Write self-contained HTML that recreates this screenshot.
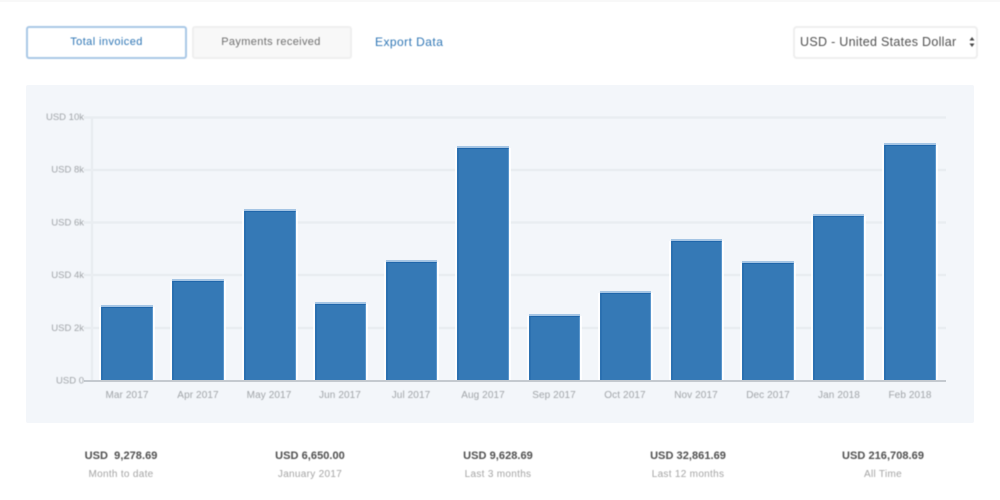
<!DOCTYPE html>
<html>
<head>
<meta charset="utf-8">
<style>
html,body{margin:0;padding:0;background:#fff;width:1000px;height:500px;overflow:hidden}
#wrap{position:relative;width:1000px;height:500px;font-family:"Liberation Sans",sans-serif}
.a{position:absolute;white-space:nowrap}
.c{text-align:center}
.box{box-sizing:border-box;filter:blur(.4px)}
.t{filter:blur(.6px)}
.v{font-size:11px;font-weight:bold;color:#4f4f4f;line-height:14px;letter-spacing:.05px;top:449px;width:160px;white-space:pre}
.s{font-size:10px;color:#a4a4a4;line-height:14px;letter-spacing:.3px;top:468px;width:160px}
.b{position:absolute;box-sizing:border-box;background:#3579b6;border-top:1.5px solid #1f66ab;border-left:2px solid #2b70b0;border-right:1px solid #5a96cc;box-shadow:0 -2px 0 #a5c5e4,-2px 0 0 rgba(255,255,255,.85),2px 0 0 rgba(255,255,255,.85)}
</style>
</head>
<body>
<div id="wrap">
<div class="a" style="left:0;top:0;width:1000px;height:2px;background:#f8f8f8"></div>

<div class="a box" style="left:26px;top:26px;width:161px;height:33px;border:2px solid #a9c8e6;border-radius:3px;background:#fff"></div>
<div class="a c t" style="left:26px;top:35px;width:161px;line-height:14px;font-size:11px;letter-spacing:.42px;color:#2f76b5">Total invoiced</div>
<div class="a box" style="left:192px;top:26px;width:160px;height:33px;border:2px solid #efefef;border-radius:3px;background:#f8f8f8"></div>
<div class="a c t" style="left:191px;top:35px;width:160px;line-height:14px;font-size:11px;letter-spacing:.35px;color:#6f6f6f">Payments received</div>
<div class="a t" style="left:375px;top:35px;font-size:12px;line-height:14px;color:#2f76b5;letter-spacing:.45px">Export Data</div>

<div class="a box" style="left:793px;top:26px;width:185px;height:33px;border:2px solid #eeeeee;border-radius:4px;background:#fff"></div>
<div class="a t" style="left:800px;top:35px;font-size:12.5px;line-height:15px;letter-spacing:.3px;color:#505050">USD - United States Dollar</div>
<svg class="a t" style="left:968px;top:36px" width="8" height="12" viewBox="0 0 8 12"><path d="M4 1L6.500 4.500H1.500ZM4 11L1.500 7.500H6.500Z" fill="#444"/></svg>

<div class="a" style="left:26px;top:85px;width:948px;height:338px;background:#f3f6fa;border-radius:2px"></div>

<svg class="a" style="left:0;top:0" width="1000" height="500" viewBox="0 0 1000 500">
<g stroke="#e9edf1" stroke-width="2.500" fill="none">
<path d="M84 117.500H946M84 170H946M84 222.500H946M84 275H946M84 328H946"/>
<path d="M92 117V381"/>
</g>
</svg>

<div class="b" style="left:101px;top:307px;width:52px;height:74px"></div>
<div class="b" style="left:172px;top:281px;width:52px;height:100px"></div>
<div class="b" style="left:244px;top:211px;width:52px;height:170px"></div>
<div class="b" style="left:315px;top:304px;width:51px;height:77px"></div>
<div class="b" style="left:386px;top:262px;width:51px;height:119px"></div>
<div class="b" style="left:457px;top:148px;width:52px;height:233px"></div>
<div class="b" style="left:529px;top:316px;width:51px;height:65px"></div>
<div class="b" style="left:600px;top:293px;width:51px;height:88px"></div>
<div class="b" style="left:671px;top:241px;width:51px;height:140px"></div>
<div class="b" style="left:742px;top:263px;width:52px;height:118px"></div>
<div class="b" style="left:813px;top:216px;width:51px;height:165px"></div>
<div class="b" style="left:884px;top:145px;width:52px;height:236px"></div>

<div class="a" style="left:84px;top:380px;width:862px;height:2px;background:#c4c9cf"></div>

<svg class="a t" style="left:0;top:0" width="1000" height="500" viewBox="0 0 1000 500">
<g font-family="Liberation Sans, sans-serif" font-size="9.500" fill="#a0a4a8" text-anchor="end">
<text x="84" y="120">USD 10k</text>
<text x="84" y="172.500">USD 8k</text>
<text x="84" y="225.500">USD 6k</text>
<text x="84" y="278">USD 4k</text>
<text x="84" y="331">USD 2k</text>
<text x="84" y="383.500">USD 0</text>
</g>
<g font-family="Liberation Sans, sans-serif" font-size="10" fill="#a0a4a8" text-anchor="middle" letter-spacing=".1">
<text x="127" y="398">Mar 2017</text>
<text x="198" y="398">Apr 2017</text>
<text x="269" y="398">May 2017</text>
<text x="340" y="398">Jun 2017</text>
<text x="411" y="398">Jul 2017</text>
<text x="483" y="398">Aug 2017</text>
<text x="554" y="398">Sep 2017</text>
<text x="625" y="398">Oct 2017</text>
<text x="696" y="398">Nov 2017</text>
<text x="768" y="398">Dec 2017</text>
<text x="839" y="398">Jan 2018</text>
<text x="910" y="398">Feb 2018</text>
</g>
</svg>

<div class="a c t v" style="left:41px">USD  9,278.69</div>
<div class="a c t s" style="left:41px">Month to date</div>

<div class="a c t v" style="left:230px">USD 6,650.00</div>
<div class="a c t s" style="left:230px">January 2017</div>

<div class="a c t v" style="left:418px">USD 9,628.69</div>
<div class="a c t s" style="left:418px">Last 3 months</div>

<div class="a c t v" style="left:608px">USD 32,861.69</div>
<div class="a c t s" style="left:608px">Last 12 months</div>

<div class="a c t v" style="left:803px">USD 216,708.69</div>
<div class="a c t s" style="left:803px">All Time</div>
</div>
</body>
</html>
